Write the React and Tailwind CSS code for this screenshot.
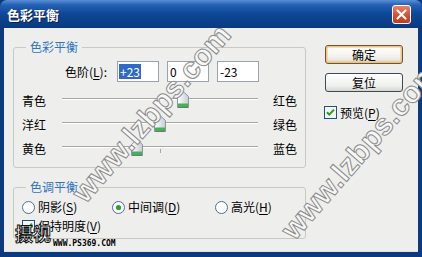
import React from 'react';

function Thumb() {
  return (
    <svg width="12" height="17" viewBox="0 0 12 17">
      <defs>
        <linearGradient id="thumbFill" x1="0" x2="1" y1="0" y2="0">
          <stop offset="0" stopColor="#ffffff" />
          <stop offset="1" stopColor="#c6ccd4" />
        </linearGradient>
      </defs>
      <path d="M6 0.5 L11.5 5.5 V16.5 H0.5 V5.5 Z" fill="url(#thumbFill)" stroke="#8b96a3" />
      <rect x="1" y="12.5" width="10" height="3" fill="#48b252" />
      <path d="M1 16 H11" stroke="#1f7a2a" />
    </svg>
  );
}

function SliderRow({ left, right, value, tick }) {
  // track is 196px wide, 0 sits in the middle
  const x = 98 + value * 0.98 - 6;
  return (
    <div className="h-[24px] flex items-center">
      <span className="ml-[8px] w-[40px]">{left}</span>
      <div className="relative w-[196px] h-[17px] mb-[4px]">
        <div className="absolute left-0 right-0 top-[7px] h-[1px] bg-[#aaa69d]" />
        <div className="absolute left-0 right-0 top-[8px] h-[1px] bg-white" />
        {tick && <div className="absolute left-[98px] top-[10px] w-[1px] h-[4px] bg-[#aaa69d]" />}
        <div className="absolute top-0" style={{ left: x }}>
          <Thumb />
        </div>
      </div>
      <span className="ml-[15px]">{right}</span>
    </div>
  );
}

function Radio({ checked }) {
  return (
    <svg width="13" height="13" viewBox="0 0 13 13">
      <circle cx="6.5" cy="6.5" r="6" fill="#ffffff" stroke="#4a6f98" />
      {checked && <circle cx="6.5" cy="6.5" r="2.6" fill="#2aa52a" />}
    </svg>
  );
}

function Check() {
  return (
    <svg width="13" height="13" viewBox="0 0 13 13">
      <rect x="0.5" y="0.5" width="12" height="12" fill="#f4f4f2" stroke="#1c5180" />
      <path d="M3 6.2 L5.3 8.6 L10 3.6" fill="none" stroke="#21a121" strokeWidth="2" />
    </svg>
  );
}

function U({ children }) {
  return <span className="underline underline-offset-2">{children}</span>;
}

export default function App() {
  return (
    <div className="relative w-[422px] h-[257px] overflow-hidden bg-[#0b3a7e] flex flex-col text-[12px] leading-none text-black font-['Noto_Sans_CJK_SC','Noto_Sans',sans-serif]">
      {/* title bar */}
      <div className="h-[28px] shrink-0 flex items-center justify-between pl-[7px] pr-[11px] rounded-t-[7px] bg-[linear-gradient(180deg,#5a8fd6_0%,#2460b4_18%,#0d4796_50%,#0a3a7e_100%)]">
        <span className="text-white font-bold text-[13px] [text-shadow:1px_1px_0_#0a2350]">色彩平衡</span>
        <div className="w-[19px] h-[19px] rounded-[3px] border border-white bg-[linear-gradient(180deg,#e8826a,#d14b2c_60%,#c03a1c)] flex items-center justify-center">
          <svg width="11" height="11" viewBox="0 0 11 11">
            <path d="M1.5 1.5 L9.5 9.5 M9.5 1.5 L1.5 9.5" stroke="#ffffff" strokeWidth="2.2" strokeLinecap="round" />
          </svg>
        </div>
      </div>

      {/* body */}
      <div className="flex-1 mx-[4px] mb-[5px] bg-[#eeeeec] flex border-b border-[#e0e0de]">
        <div className="w-[302px] pl-[9px] pt-[11px]">
          <fieldset className="h-[129px] border border-[#c9c9c1] rounded-[3px]">
            <legend className="ml-[12px] px-[4px] h-[16px] leading-[16px] text-[#2f74c0]">色彩平衡</legend>
            <div className="mt-[6px] h-[21px] flex items-center">
              <span className="w-[93px] text-right">
                色阶(<U>L</U>):
              </span>
              <div className="ml-[10px] flex gap-[8px]">
                <div className="w-[42px] h-[21px] bg-white border border-[#9aa3ad] flex items-center pl-[1px]">
                  <span className="bg-[#316ac5] text-white px-[1px] h-[15px] leading-[15px]">+23</span>
                </div>
                <div className="w-[42px] h-[21px] bg-white border border-[#9aa3ad] flex items-center pl-[2px]">0</div>
                <div className="w-[42px] h-[21px] bg-white border border-[#9aa3ad] flex items-center pl-[2px]">-23</div>
              </div>
            </div>
            <div className="mt-[7px]">
              <SliderRow left="青色" right="红色" value={23} />
              <SliderRow left="洋红" right="绿色" value={0} />
              <SliderRow left="黄色" right="蓝色" value={-23} tick />
            </div>
          </fieldset>

          <fieldset className="mt-[11px] h-[60px] border border-[#c9c9c1] rounded-[3px]">
            <legend className="ml-[12px] px-[4px] h-[16px] leading-[16px] text-[#2f74c0]">色调平衡</legend>
            <div className="ml-[8px] mt-[4px] h-[16px] flex items-center">
              <div className="w-[90px] flex items-center gap-[3px]">
                <Radio />
                <span>
                  阴影(<U>S</U>)
                </span>
              </div>
              <div className="w-[103px] flex items-center gap-[3px]">
                <Radio checked />
                <span>
                  中间调(<U>D</U>)
                </span>
              </div>
              <div className="flex items-center gap-[3px]">
                <Radio />
                <span>
                  高光(<U>H</U>)
                </span>
              </div>
            </div>
            <div className="ml-[8px] mt-[3px] h-[16px] flex items-center gap-[3px]">
              <Check />
              <span>
                保持明度(<U>V</U>)
              </span>
            </div>
          </fieldset>
        </div>

        <div className="pl-[19px] pt-[17px] flex flex-col">
          <button className="w-[78px] h-[19px] rounded-[3px] border border-[#6f5533] bg-[linear-gradient(180deg,#ffffff,#f1efe8_70%,#ddd6c6)] shadow-[inset_0_0_0_1.5px_#f0c27c] text-[12px] leading-none">
            确定
          </button>
          <button className="mt-[9px] w-[78px] h-[19px] rounded-[3px] border border-[#3f4a58] bg-[linear-gradient(180deg,#ffffff,#efefed_70%,#d4d4d0)] text-[12px] leading-none">
            复位
          </button>
          <div className="mt-[14px] -ml-[1px] flex items-center gap-[3px]">
            <Check />
            <span>
              预览(<U>P</U>)
            </span>
          </div>
        </div>
      </div>

      {/* watermarks */}
      <span className="pointer-events-none absolute left-[78px] top-[183px] origin-left -rotate-[49deg] whitespace-nowrap text-[30px] leading-[30px] font-bold font-['Liberation_Sans',sans-serif] text-[#f7f7f7] [-webkit-text-stroke:1px_#8c8c8c]">
        www.lzbps.com
      </span>
      <span className="pointer-events-none absolute left-[287px] top-[220px] origin-left -rotate-[49deg] whitespace-nowrap text-[30px] leading-[30px] font-bold font-['Liberation_Sans',sans-serif] text-[#f7f7f7] [-webkit-text-stroke:1px_#8c8c8c]">
        www.lzbps.com
      </span>
      <span className="pointer-events-none absolute left-[15px] top-[222px] text-[18px] leading-[22px] font-bold text-white [-webkit-text-stroke:1px_#111]">
        摄视
      </span>
      <span className="pointer-events-none absolute left-[53px] top-[239px] text-[8px] leading-[9px] font-bold font-['DejaVu_Sans_Mono',monospace] text-black">
        WWW.PS369.COM
      </span>
    </div>
  );
}
